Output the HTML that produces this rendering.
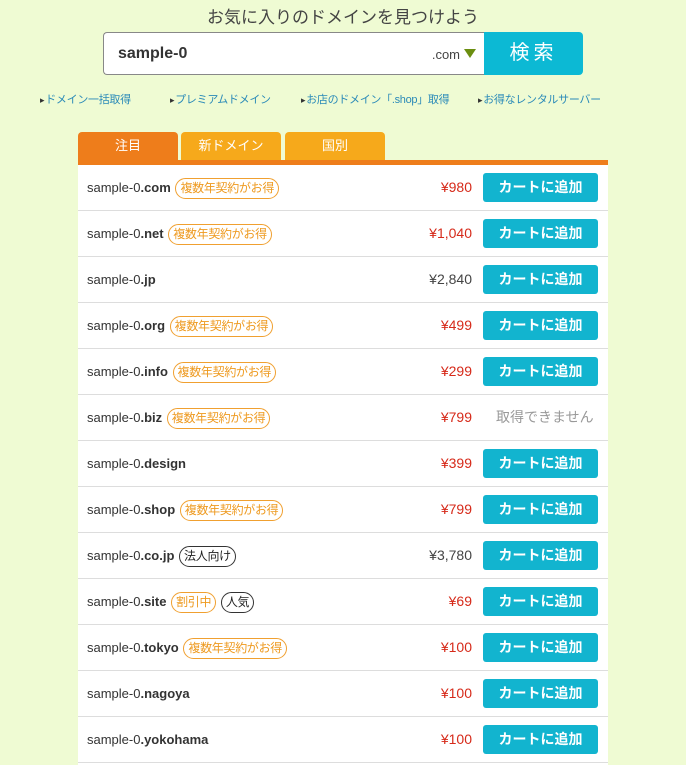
<!DOCTYPE html>
<html><head><meta charset="utf-8"><style>
body{margin:0;width:686px;height:764px;background:#effbd3;font-family:"Liberation Sans","Noto Sans CJK JP",sans-serif;position:relative;overflow:hidden}
.t{position:absolute;left:0;width:686px;top:3px;text-align:center;font-size:17px;color:#444}
.box{position:absolute;left:103px;top:32px;width:381px;height:43px;background:#fff;border:1px solid #888;border-right:none;border-radius:4px 0 0 4px;box-sizing:border-box}
.box b{position:absolute;left:14px;top:12px;font-size:16px;color:#333}
.box span{position:absolute;right:24px;top:14px;font-size:13px;color:#444}
.tri{position:absolute;right:8px;top:16px;width:0;height:0;border-left:6px solid transparent;border-right:6px solid transparent;border-top:9px solid #6b8e10}
.sb{position:absolute;left:484px;top:32px;width:99px;height:43px;background:#0cb9d4;border-radius:0 4px 4px 0;color:#fff;font-size:20px;text-align:center;line-height:43px;letter-spacing:4px}
.l{position:absolute;top:91px;font-size:11px;color:#2a8ab8;white-space:nowrap;letter-spacing:-0.3px}
.l:before{content:"▸";font-size:9px;color:#333;margin-right:1px}
.tab{position:absolute;top:132px;height:28px;width:100px;background:#f6a91b;color:#fff;text-align:center;line-height:28px;font-size:13px;border-radius:4px 4px 0 0}
.bar{position:absolute;left:78px;top:160px;width:530px;height:5px;background:#ee7d1b}
.tbl{position:absolute;left:78px;top:165px;width:530px;height:600px;background:#fff}
.r{position:absolute;left:0;width:530px;height:46px;border-bottom:1px solid #ddd;box-sizing:border-box}
.d{position:absolute;left:9px;top:0;height:45px;line-height:45px;font-size:13px;color:#333;white-space:nowrap}
.g{display:inline-block;border:1px solid #f0a030;color:#ee9a20;border-radius:11px;padding:0 4px;font-size:12px;line-height:19px;height:19px;margin-left:1px;vertical-align:middle;letter-spacing:-0.3px}
.k{border-color:#333;color:#222}
.p{position:absolute;right:136px;top:0;line-height:45px;font-size:14px;color:#d62a1a}
.p.n{color:#444}
.btn{position:absolute;left:405px;top:8px;width:115px;height:29px;background:#12b4cf;border-radius:3px;color:#fff;font-weight:bold;font-size:14px;text-align:center;line-height:29px}
.na{position:absolute;left:418px;top:0;line-height:45px;font-size:14px;color:#999}
</style></head><body>
<div class="t">お気に入りのドメインを見つけよう</div>
<div class="box"><b>sample-0</b><span>.com</span><div class="tri"></div></div>
<div class="sb">検索</div>
<div class="l" style="left:40px">ドメイン一括取得</div>
<div class="l" style="left:170px">プレミアムドメイン</div>
<div class="l" style="left:301px">お店のドメイン「.shop」取得</div>
<div class="l" style="left:478px">お得なレンタルサーバー</div>
<div class="tab" style="left:78px;background:#ee7d1b">注目</div>
<div class="tab" style="left:181px">新ドメイン</div>
<div class="tab" style="left:285px">国別</div>
<div class="bar"></div>
<div class="tbl">
<div class="r" style="top:0"><div class="d">sample-0<b>.com</b> <span class="g">複数年契約がお得</span></div><div class="p">¥980</div><div class="btn">カートに追加</div></div>
<div class="r" style="top:46px"><div class="d">sample-0<b>.net</b> <span class="g">複数年契約がお得</span></div><div class="p">¥1,040</div><div class="btn">カートに追加</div></div>
<div class="r" style="top:92px"><div class="d">sample-0<b>.jp</b></div><div class="p n">¥2,840</div><div class="btn">カートに追加</div></div>
<div class="r" style="top:138px"><div class="d">sample-0<b>.org</b> <span class="g">複数年契約がお得</span></div><div class="p">¥499</div><div class="btn">カートに追加</div></div>
<div class="r" style="top:184px"><div class="d">sample-0<b>.info</b> <span class="g">複数年契約がお得</span></div><div class="p">¥299</div><div class="btn">カートに追加</div></div>
<div class="r" style="top:230px"><div class="d">sample-0<b>.biz</b> <span class="g">複数年契約がお得</span></div><div class="p">¥799</div><div class="na">取得できません</div></div>
<div class="r" style="top:276px"><div class="d">sample-0<b>.design</b></div><div class="p">¥399</div><div class="btn">カートに追加</div></div>
<div class="r" style="top:322px"><div class="d">sample-0<b>.shop</b> <span class="g">複数年契約がお得</span></div><div class="p">¥799</div><div class="btn">カートに追加</div></div>
<div class="r" style="top:368px"><div class="d">sample-0<b>.co.jp</b> <span class="g k">法人向け</span></div><div class="p n">¥3,780</div><div class="btn">カートに追加</div></div>
<div class="r" style="top:414px"><div class="d">sample-0<b>.site</b> <span class="g">割引中</span> <span class="g k">人気</span></div><div class="p">¥69</div><div class="btn">カートに追加</div></div>
<div class="r" style="top:460px"><div class="d">sample-0<b>.tokyo</b> <span class="g">複数年契約がお得</span></div><div class="p">¥100</div><div class="btn">カートに追加</div></div>
<div class="r" style="top:506px"><div class="d">sample-0<b>.nagoya</b></div><div class="p">¥100</div><div class="btn">カートに追加</div></div>
<div class="r" style="top:552px"><div class="d">sample-0<b>.yokohama</b></div><div class="p">¥100</div><div class="btn">カートに追加</div></div>
</div>
</body></html>
